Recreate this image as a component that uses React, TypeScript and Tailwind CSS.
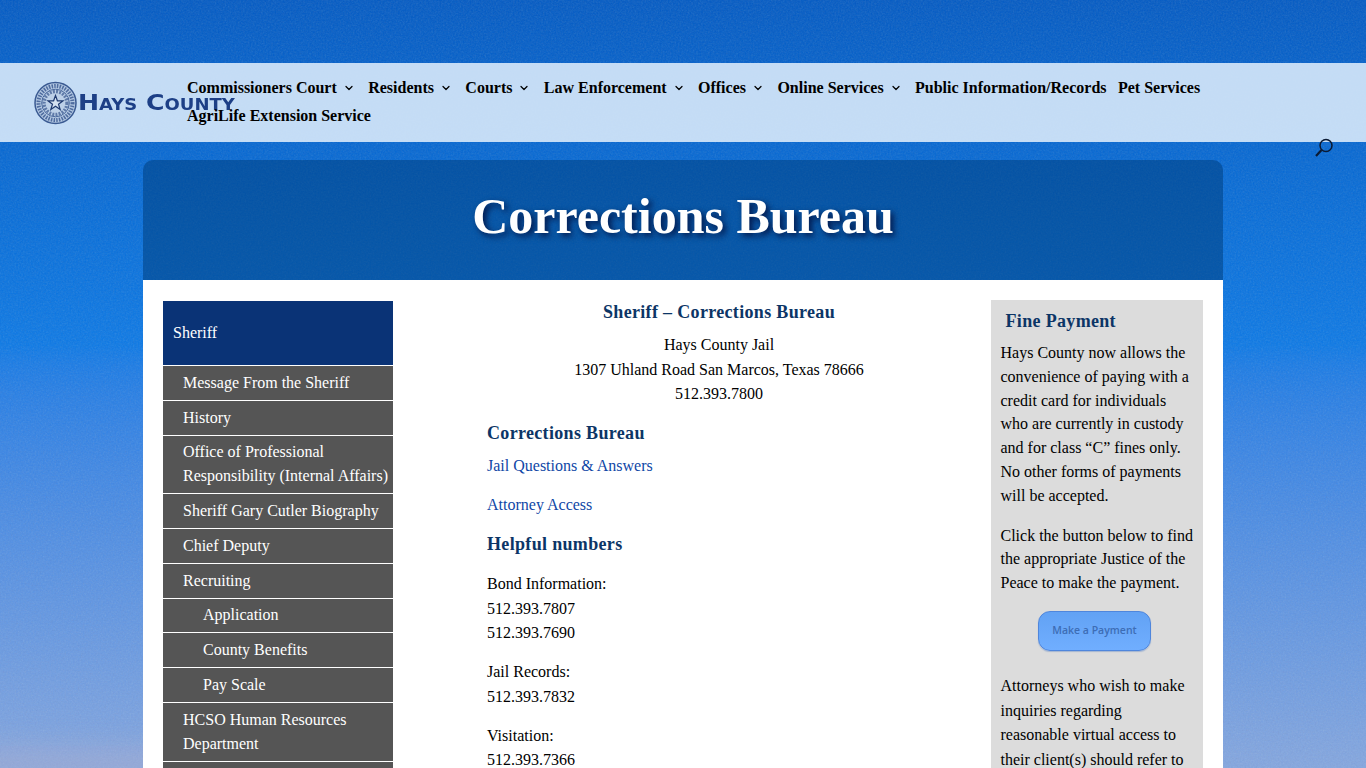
import { ChevronDown } from "lucide-react";

const navItems = [
  { label: "Commissioners Court", sub: true },
  { label: "Residents", sub: true },
  { label: "Courts", sub: true },
  { label: "Law Enforcement", sub: true },
  { label: "Offices", sub: true },
  { label: "Online Services", sub: true },
  { label: "Public Information/Records", sub: false },
  { label: "Pet Services", sub: false },
  { label: "AgriLife Extension Service", sub: false },
];

const sideItems = [
  { label: "Message From the Sheriff" },
  { label: "History" },
  { label: "Office of Professional Responsibility (Internal Affairs)" },
  { label: "Sheriff Gary Cutler Biography" },
  { label: "Chief Deputy" },
  { label: "Recruiting" },
  { label: "Application", nested: true },
  { label: "County Benefits", nested: true },
  { label: "Pay Scale", nested: true },
  { label: "HCSO Human Resources Department" },
];

function Seal() {
  return (
    <svg width="43" height="44" viewBox="0 0 43 44" className="shrink-0">
      <circle cx="21.5" cy="22" r="20.5" fill="#b3c8e2" stroke="#3a5a92" strokeWidth="1.5" />
      <circle cx="21.5" cy="22" r="17" fill="none" stroke="#4f6c9f" strokeWidth="4" strokeDasharray="1.5 1.2" />
      <circle cx="21.5" cy="22" r="13.8" fill="#bcd0e8" stroke="#3a5a92" strokeWidth="0.9" />
      <circle cx="21.5" cy="22" r="11.5" fill="none" stroke="#5f7aa8" strokeWidth="3.4" strokeDasharray="2 1.2" />
      <path
        d="M21.5 14.5l1.9 5.3h5.6l-4.5 3.4 1.7 5.4-4.7-3.3-4.7 3.3 1.7-5.4-4.5-3.4h5.6z"
        fill="#d5e2f1"
        stroke="#1f3a70"
        strokeWidth="1.2"
      />
    </svg>
  );
}

export default function App() {
  return (
    <div className="relative h-[768px] overflow-hidden bg-gradient-to-b from-[#0059c4] via-[#0a78e6] via-45% to-[#83a6e0] font-['Liberation_Serif',serif] text-black">
      <svg className="absolute inset-0 h-full w-full opacity-[0.18]" aria-hidden="true">
        <filter id="grain">
          <feTurbulence type="fractalNoise" baseFrequency="0.6" numOctaves="2" seed="4" />
          <feColorMatrix type="saturate" values="0.3" />
        </filter>
        <rect width="100%" height="100%" filter="url(#grain)" />
      </svg>
      <div className="absolute bottom-[-14px] left-[-40px] h-[36px] w-[560px] rounded-full bg-[#b5aecb]/35 blur-md" />

      <div className="relative pt-[63px]">
        <header className="relative flex h-[79px] bg-[#d8e9fa]/90 pl-[34px]">
          <div className="flex h-[44px] w-[153px] shrink-0 items-center self-center whitespace-nowrap">
            <Seal />
            <span className="ml-[1px] mt-[1px] inline-block origin-left scale-x-[1.2] font-['DejaVu_Sans',sans-serif] text-[21px] font-bold leading-none text-[#1d3f86] [font-variant-caps:small-caps]">
              Hays County
            </span>
          </div>
          <nav className="relative flex w-[1030px] flex-wrap content-start gap-x-[11.4px] pt-[11px] text-[16px] font-bold leading-[28px]">
            {navItems.map((item) => (
              <a key={item.label} className="flex items-center whitespace-nowrap">
                {item.label}
                {item.sub && <ChevronDown className="ml-[6px] mr-[2px] h-[12px] w-[12px]" strokeWidth={2.5} />}
              </a>
            ))}
          </nav>
          <svg
            className="absolute left-[1314px] top-[74px] text-[#0b1a33]"
            width="20"
            height="22"
            viewBox="0 0 20 22"
            fill="none"
            stroke="currentColor"
          >
            <circle cx="12" cy="8.5" r="6" strokeWidth="1.5" />
            <path d="M7.5 13L2 19" strokeWidth="2.2" />
          </svg>
        </header>

        <main className="mx-auto mt-[18px] w-[1080px]">
          <div className="flex h-[120px] items-center justify-center rounded-t-[10px] bg-[#003f80]/55 pb-[9px]">
            <h1 className="text-[50px] font-bold leading-none text-white [text-shadow:3px_3px_6px_rgba(0,0,40,0.75)]">
              Corrections Bureau
            </h1>
          </div>

          <div className="flex h-[500px] bg-white px-[20px] pt-[20px]">
            <aside className="mt-[1px] w-[230px] shrink-0 text-[16px] leading-[24px] text-white">
              <div className="flex h-[64px] items-center bg-[#0a3376] px-[10px]">Sheriff</div>
              <ul className="border-t border-white">
                {sideItems.map((item) => (
                  <li
                    key={item.label}
                    className={`border-b border-white bg-[#555555] py-[4.89px] pr-1 ${item.nested ? "pl-[40px]" : "pl-[20px]"}`}
                  >
                    {item.label}
                  </li>
                ))}
                <li className="h-[35px] bg-[#555555]" />
              </ul>
            </aside>

            <section className="ml-[94px] w-[464px] text-[16px] leading-[24.5px]">
              <h2 className="mb-[9.3px] text-center text-[18px] font-bold leading-[24px] tracking-[0.33px] text-[#0c3566]">
                Sheriff – Corrections Bureau
              </h2>
              <p className="text-center">
                Hays County Jail
                <br />
                1307 Uhland Road San Marcos, Texas 78666
                <br />
                512.393.7800
              </p>
              <h3 className="mt-[14.4px] text-[18px] font-bold leading-[24px] tracking-[0.33px] text-[#0c3566]">
                Corrections Bureau
              </h3>
              <p className="mt-[9px]">
                <a className="text-[#0f47a6]">Jail Questions &amp; Answers</a>
              </p>
              <p className="mt-[14.5px]">
                <a className="text-[#0f47a6]">Attorney Access</a>
              </p>
              <h3 className="mt-[14.5px] text-[18px] font-bold leading-[24px] tracking-[0.33px] text-[#0c3566]">
                Helpful numbers
              </h3>
              <p className="mt-[16px]">
                Bond Information:
                <br />
                512.393.7807
                <br />
                512.393.7690
              </p>
              <p className="mt-[14.5px]">
                Jail Records:
                <br />
                512.393.7832
              </p>
              <p className="mt-[14.5px]">
                Visitation:
                <br />
                512.393.7366
              </p>
            </section>

            <aside className="ml-[40px] w-[212px] shrink-0 bg-[#dcdcdc] pl-[9.5px] pr-[9.5px] pt-[9px] text-[16px] leading-[23.8px]">
              <h4 className="mb-[8px] pl-[5px] text-[18px] font-bold leading-[24px] tracking-[0.33px] text-[#0c3566]">
                Fine Payment
              </h4>
              <p>
                Hays County now allows the convenience of paying with a credit card for individuals who are currently in
                custody and for class “C” fines only. No other forms of payments will be accepted.
              </p>
              <p className="mt-[16px]">
                Click the button below to find the appropriate Justice of the Peace to make the payment.
              </p>
              <div className="mb-[23px] ml-[37.5px] mt-[16px] flex h-[40px] w-[113px] items-center justify-center rounded-[12px] border border-[#4f86dc] bg-gradient-to-b from-[#62a2f4] to-[#70aeff] font-['Open_Sans',sans-serif] text-[10.5px] font-semibold text-[#3d6db5] shadow-[0_1px_1px_rgba(60,110,190,0.35)]">
                Make a Payment
              </div>
              <p className="leading-[24.6px]">
                Attorneys who wish to make inquiries regarding reasonable virtual access to their client(s) should refer
                to
              </p>
            </aside>
          </div>
        </main>
      </div>
    </div>
  );
}
